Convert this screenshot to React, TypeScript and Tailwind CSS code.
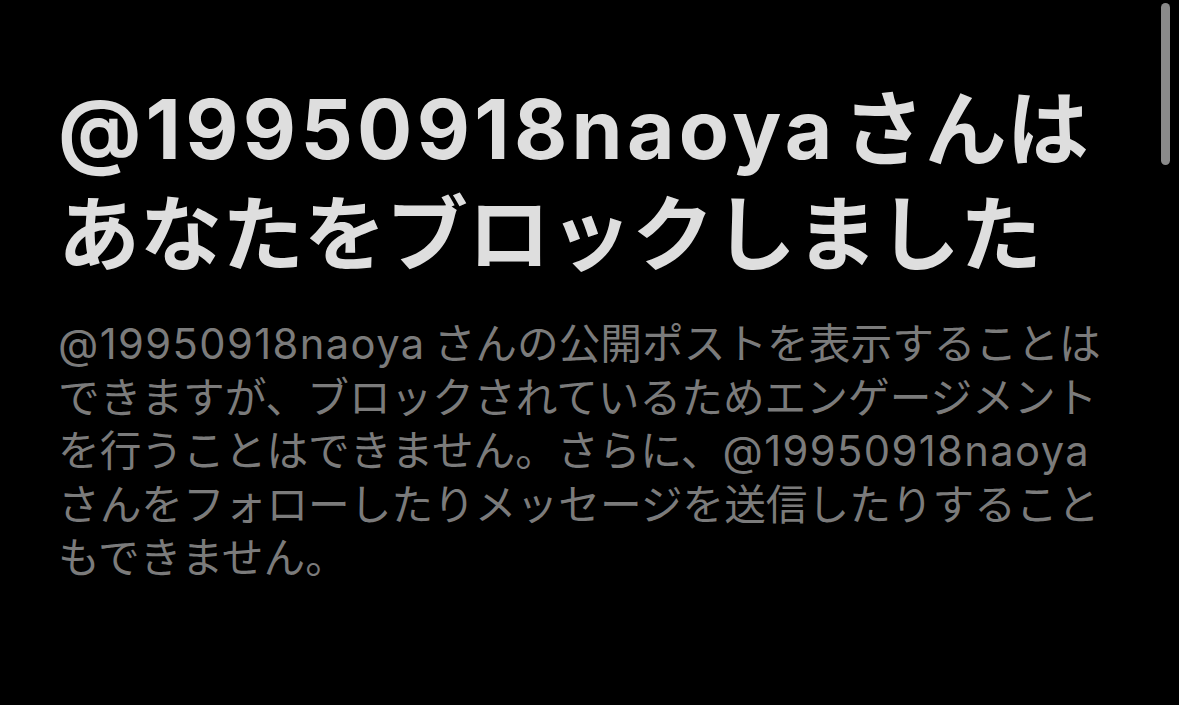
import React from 'react';

// latin handle runs a bit wider than the CJK glyphs around it
const Handle = ({ className }: { className: string }) => (
    <span className={className}>@19950918naoya</span>
);

export default function App() {
    return (
        <div
            className="relative w-[1179px] h-[705px] overflow-hidden bg-black"
            style={{ fontFamily: 'Inter, "Noto Sans CJK JP", sans-serif' }}
        >
            <div className="pl-[58px] pt-[77px]">
                <h1 className="text-[82px] leading-[105px] font-bold text-[#dedede] whitespace-nowrap">
                    <span className="block">
                        <Handle className="tracking-[4.3px] mr-[6px]" />さんは
                    </span>
                    <span className="block">あなたをブロックしました</span>
                </h1>

                <p className="mt-[31px] text-[41.7px] leading-[53.6px] text-[#7b7b7b] whitespace-nowrap">
                    <span className="block">
                        <Handle className="tracking-[1.4px] mr-[8px]" />さんの公開ポストを表示することは
                    </span>
                    <span className="block">できますが、ブロックされているためエンゲージメント</span>
                    <span className="block">
                        を行うことはできません。さらに、<Handle className="tracking-[1.4px]" />
                    </span>
                    <span className="block">さんをフォローしたりメッセージを送信したりすること</span>
                    <span className="block">もできません。</span>
                </p>
            </div>

            {/* overlay scroll indicator */}
            <div className="absolute right-[9px] top-[3px] w-[9px] h-[162px] rounded-full bg-[#8a8a8a]" />
        </div>
    );
}
